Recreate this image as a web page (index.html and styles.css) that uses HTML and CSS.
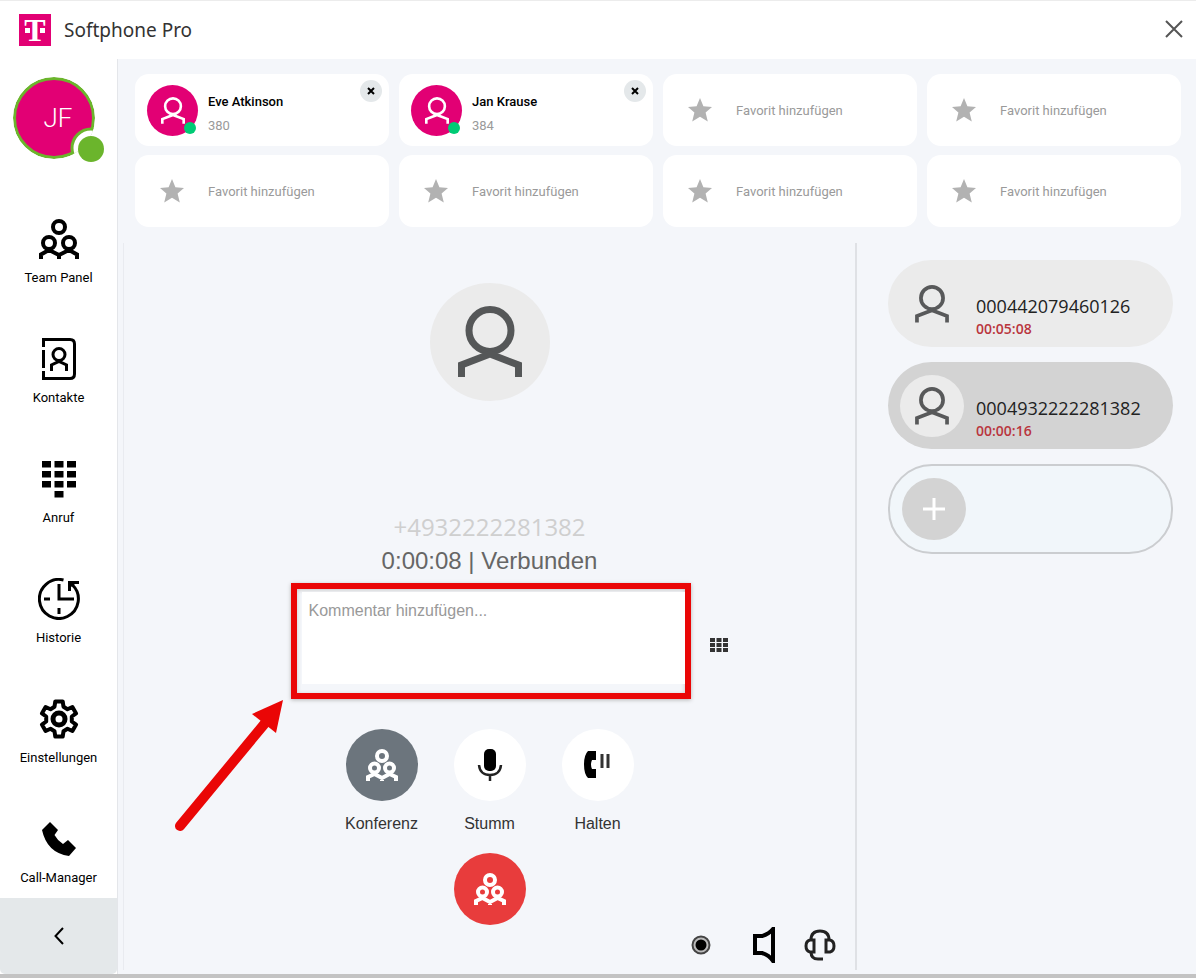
FILE: index.html
```html
<!DOCTYPE html>
<html lang="de">
  <head>
    <meta charset="UTF-8">
    <title>Softphone Pro</title>
    <link rel="stylesheet" href="styles.css">
  </head>
  <body>
    <svg class="sprite" aria-hidden="true">
      <symbol id="person" viewBox="0 0 64 72">
        <g fill="none" stroke="currentColor" stroke-width="7">
          <circle cx="32" cy="24.500" r="21"/>
          <path d="M3.500 71V59L32 48L60.500 59V71"/>
        </g>
      </symbol>
      <symbol id="team" viewBox="0 0 40 40">
        <g fill="none" stroke="currentColor" stroke-width="4">
          <circle cx="20" cy="8" r="6"/>
          <circle cx="10" cy="24" r="6"/>
          <circle cx="30" cy="24" r="6"/>
          <path d="M2 40V35.500L10 31L20 36L30 31L38 35.500V40M20 35V40"/>
        </g>
      </symbol>
      <symbol id="team-bold" viewBox="0 0 32 32">
        <g fill="none" stroke="currentColor" stroke-width="4">
          <circle cx="16" cy="7" r="5"/>
          <circle cx="8.500" cy="19" r="4.500"/>
          <circle cx="23.500" cy="19" r="4.500"/>
          <path d="M2 32V28L8.500 25L16 29L23.500 25L30 28V32M16 28V32"/>
        </g>
      </symbol>
      <symbol id="star" viewBox="0 0 24 24">
        <path fill="currentColor" d="M12 0L15.400 8.200L24 9L17.600 14.600L19.800 23.500L12 18.800L4.200 23.500L6.400 14.600L0 9L8.600 8.200Z"/>
      </symbol>
      <symbol id="cross" viewBox="0 0 8 8">
        <path d="M1 1L7 7M7 1L1 7" fill="none" stroke="currentColor" stroke-width="2"/>
      </symbol>
    </svg>

    <header class="titlebar">
      <span class="logo">T</span>
      <h1>Softphone Pro</h1>
      <button class="close" aria-label="Schließen">
        <svg width="18" height="18" viewBox="0 0 18 18"><path d="M1 1L17 17M17 1L1 17" stroke="#555" stroke-width="2"/></svg>
      </button>
    </header>

    <div class="app">
      <aside class="sidebar">
        <svg class="profile" width="92" height="86" viewBox="0 0 92 86">
          <clipPath id="disc"><circle cx="41" cy="41" r="41"/></clipPath>
          <g clip-path="url(#disc)">
            <circle cx="41" cy="41" r="39.500" fill="#e20074" stroke="#6bb52c" stroke-width="3"/>
            <circle cx="78" cy="71" r="19" fill="#fff" stroke="#6bb52c" stroke-width="3"/>
          </g>
          <circle cx="78" cy="72" r="13" fill="#6bb52c"/>
          <text x="45" y="50" text-anchor="middle">JF</text>
        </svg>

        <nav>
          <a href="#team">
            <span class="icon"><svg width="40" height="40"><use href="#team"/></svg></span>
            Team Panel
          </a>
          <a href="#kontakte">
            <span class="icon">
              <svg width="34" height="42" viewBox="0 0 34 42" fill="none" stroke="#000" stroke-width="3">
                <path d="M1.500 9V1.500H28Q32.500 1.500 32.500 6V36Q32.500 40.500 28 40.500H1.500V33M1.500 12V30"/>
                <circle cx="17" cy="16.500" r="6"/>
                <path d="M9.500 33V27L17 23.500L24.500 27V33"/>
              </svg>
            </span>
            Kontakte
          </a>
          <a href="#anruf">
            <span class="icon">
              <svg width="34" height="37" viewBox="0 0 34 37">
                <path d="M0 0h9v6.500h-9zM12.500 0h9v6.500h-9zM25 0h9v6.500h-9zM0 10h9v6.500h-9zM12.500 10h9v6.500h-9zM25 10h9v6.500h-9zM0 20h9v6.500h-9zM12.500 20h9v6.500h-9zM25 20h9v6.500h-9zM12.500 30h9v6.500h-9z"/>
              </svg>
            </span>
            Anruf
          </a>
          <a href="#historie">
            <span class="icon">
              <svg width="42" height="42" viewBox="0 0 42 42" fill="none" stroke="#000" stroke-width="3">
                <path d="M25.500 2A19.500 19.500 0 1 0 34.500 7"/>
                <path d="M21 6V21H36M6 21H12M21 30V36"/>
                <path d="M30 3H41V6H37L33 9V13H30Z" fill="#000" stroke="none"/>
              </svg>
            </span>
            Historie
          </a>
          <a href="#einstellungen">
            <span class="icon">
              <svg width="40" height="40" viewBox="0 0 40 40" fill="none" stroke="#000" stroke-width="4" stroke-linejoin="round">
                <path d="M16.300 2.400H23.700L24.500 7.700L28.500 10.200L33.400 8L37.100 14.400L32.800 17.500V22.500L37.100 25.600L33.400 32L28.500 29.800L24.500 32.300L23.700 37.600H16.300L15.500 32.300L11.500 29.800L6.600 32L2.900 25.600L7.200 22.500V17.500L2.900 14.400L6.600 8L11.500 10.200L15.500 7.700Z"/>
                <circle cx="20" cy="20" r="6" stroke-width="5"/>
              </svg>
            </span>
            Einstellungen
          </a>
          <a href="#manager">
            <span class="icon">
              <svg width="34" height="34" viewBox="0 0 34 34"><path d="M8 0L16 8L12.500 13Q15.500 18.500 21 22L26 18L34 26L27 34Q5 31 0 8Z"/></svg>
            </span>
            Call-Manager
          </a>
        </nav>

        <button class="collapse" aria-label="Einklappen">
          <svg width="10" height="18" viewBox="0 0 10 18"><path d="M9 1L1.500 9L9 17" fill="none" stroke="#000" stroke-width="2"/></svg>
        </button>
      </aside>

      <main>
        <section class="favorites">
          <div class="card">
            <span class="avatar"><svg width="24" height="27"><use href="#person"/></svg></span>
            <div class="contact"><strong>Eve Atkinson</strong><small>380</small></div>
            <button class="remove" aria-label="Entfernen"><svg width="8" height="8"><use href="#cross"/></svg></button>
          </div>
          <div class="card">
            <span class="avatar"><svg width="24" height="27"><use href="#person"/></svg></span>
            <div class="contact"><strong>Jan Krause</strong><small>384</small></div>
            <button class="remove" aria-label="Entfernen"><svg width="8" height="8"><use href="#cross"/></svg></button>
          </div>
          <button class="card"><svg class="star"><use href="#star"/></svg>Favorit hinzufügen</button>
          <button class="card"><svg class="star"><use href="#star"/></svg>Favorit hinzufügen</button>
          <button class="card"><svg class="star"><use href="#star"/></svg>Favorit hinzufügen</button>
          <button class="card"><svg class="star"><use href="#star"/></svg>Favorit hinzufügen</button>
          <button class="card"><svg class="star"><use href="#star"/></svg>Favorit hinzufügen</button>
          <button class="card"><svg class="star"><use href="#star"/></svg>Favorit hinzufügen</button>
        </section>

        <div class="content">
          <section class="call">
            <span class="caller"><svg width="64" height="72"><use href="#person"/></svg></span>
            <p class="number">+4932222281382</p>
            <p class="status">0:00:08 | Verbunden</p>

            <div class="comment-row">
              <div class="comment">
                <textarea aria-label="Kommentar" placeholder="Kommentar hinzufügen..."></textarea>
                <svg class="arrow" width="112" height="134" viewBox="0 0 112 134">
                  <path d="M7 127L93 23" stroke="#ea0606" stroke-width="10" stroke-linecap="round"/>
                  <path d="M110 1L79 15L103 34Z" fill="#ea0606"/>
                </svg>
              </div>
              <button class="keypad" aria-label="Tastenfeld">
                <svg width="18" height="14" viewBox="0 0 18 14"><path fill="#333" d="M0 0h5v4H0zM6.500 0h5v4h-5zM13 0h5v4h-5zM0 5h5v4H0zM6.500 5h5v4h-5zM13 5h5v4h-5zM0 10h5v4H0zM6.500 10h5v4h-5zM13 10h5v4h-5z"/></svg>
              </button>
            </div>

            <div class="actions">
              <button>
                <span class="round gray"><svg width="32" height="32"><use href="#team-bold"/></svg></span>
                Konferenz
              </button>
              <button>
                <span class="round">
                  <svg width="26" height="32" viewBox="0 0 26 32">
                    <rect x="7" y="0" width="12" height="22" rx="5"/>
                    <path d="M2 16Q3 26 13 26T24 16M13 26V32" fill="none" stroke="#222" stroke-width="2.500"/>
                  </svg>
                </span>
                Stumm
              </button>
              <button>
                <span class="round">
                  <svg width="28" height="30" viewBox="0 0 28 30">
                    <path d="M4 1H12V10H8Q6 14.500 8 19H12V28H4Q0 24 0 14.500T4 1Z"/>
                    <path d="M18 4V18M24 4V18" stroke="#333" stroke-width="3"/>
                  </svg>
                </span>
                Halten
              </button>
            </div>
            <button class="round red" aria-label="Auflegen"><svg width="32" height="32"><use href="#team-bold"/></svg></button>

            <div class="tools">
              <button aria-label="Aufnahme">
                <svg width="20" height="20" viewBox="0 0 20 20"><circle cx="10" cy="10" r="8.500" fill="#bbb" stroke="#444" stroke-width="2"/><circle cx="10" cy="10" r="5.500"/></svg>
              </button>
              <button aria-label="Lautsprecher">
                <svg width="22" height="36" viewBox="0 0 22 36"><path d="M2 9H9Q16 7 20 2V34Q16 28 9 26H2Z" fill="none" stroke="#000" stroke-width="4"/></svg>
              </button>
              <button aria-label="Headset">
                <svg width="32" height="32" viewBox="0 0 32 32" fill="none" stroke="#222" stroke-width="3">
                  <path d="M7 11Q7 2 16 2T25 11M6 11H10V23H6Q2 22 2 17T6 11ZM26 11H22V23H26Q30 22 30 17T26 11ZM7 23Q7 30 14 30H19"/>
                </svg>
              </button>
            </div>
          </section>

          <aside class="lines">
            <button class="line">
              <span class="line-icon"><svg width="34" height="38"><use href="#person"/></svg></span>
              <span class="line-text">000442079460126<time>00:05:08</time></span>
            </button>
            <button class="line active">
              <span class="line-icon"><svg width="34" height="38"><use href="#person"/></svg></span>
              <span class="line-text">0004932222281382<time>00:00:16</time></span>
            </button>
            <button class="line add" aria-label="Leitung hinzufügen">
              <span class="line-icon"><svg width="22" height="22" viewBox="0 0 22 22"><path d="M11 0V22M0 11H22" stroke="#fff" stroke-width="3"/></svg></span>
            </button>
          </aside>
        </div>
      </main>
    </div>
  </body>
</html>
```
FILE: styles.css
```css
* {
  box-sizing: border-box;
}

body {
  display: flex;
  flex-direction: column;
  min-height: 100vh;
  margin: 0;
  border-top: 1px solid #ececec;
  border-bottom: 4px solid #c3c3c3;
  background-color: #fff;
  color: #000;
  font-family: Roboto, "Liberation Sans", sans-serif;
  font-size: 13px;
}

button {
  padding: 0;
  border: none;
  background: none;
  color: inherit;
  font: inherit;
  cursor: pointer;
}

svg {
  display: block;
}

.sprite {
  position: absolute;
  width: 0;
  height: 0;
}

/* title bar */
.titlebar {
  display: flex;
  align-items: center;
  height: 58px;
  padding: 0 12px 0 19px;
}

.logo {
  position: relative;
  width: 32px;
  height: 32px;
  background-color: #e20074;
  color: #fff;
  font: bold 32px/32px "Liberation Serif", serif;
  text-align: center;
}

.logo::before,
.logo::after {
  content: "";
  position: absolute;
  top: 14px;
  left: 6px;
  width: 5px;
  height: 5px;
  background-color: #fff;
}

.logo::after {
  right: 6px;
  left: auto;
}

h1 {
  margin: 0 auto 0 13px;
  color: #333;
  font: 19px/28px "Noto Sans", sans-serif;
}

.close {
  padding: 0 1px 2px;
}

.app {
  display: flex;
  flex: 1;
}

/* sidebar */
.sidebar {
  display: flex;
  flex-direction: column;
  flex: none;
  width: 117px;
}

.profile {
  margin: 18px 0 0 13px;
}

.profile text {
  fill: #fff;
  font-size: 26px;
  font-weight: 300;
}

nav {
  display: flex;
  flex-direction: column;
  gap: 51px;
  margin-top: 55px;
}

nav a {
  color: #000;
  line-height: 18px;
  text-align: center;
  text-decoration: none;
}

.icon {
  display: flex;
  align-items: center;
  justify-content: center;
  height: 42px;
  margin-bottom: 9px;
}

.collapse {
  display: flex;
  align-items: center;
  justify-content: center;
  height: 76px;
  margin-top: auto;
  border-radius: 0 0 5px 5px;
  background-color: #e4e8ea;
}

/* favorites */
main {
  display: flex;
  flex-direction: column;
  flex: 1;
  min-width: 0;
  border-left: 1px solid #e4e6ea;
  background-color: #f4f6fa;
}

.favorites {
  display: grid;
  grid-template-columns: repeat(4, 1fr);
  gap: 9px 10px;
  padding: 15px 15px 16px 17px;
}

.card {
  position: relative;
  display: flex;
  align-items: center;
  gap: 10px;
  height: 72px;
  padding-left: 12px;
  border-radius: 14px;
  background-color: #fff;
  color: #9a9a9a;
}

.contact {
  padding-top: 7px;
}

.card strong,
.card small {
  display: block;
  font-size: 13px;
  line-height: 24px;
}

.card strong {
  color: #000;
  font-weight: 500;
}

.avatar {
  position: relative;
  display: flex;
  align-items: center;
  justify-content: center;
  width: 51px;
  height: 51px;
  border-radius: 50%;
  background-color: #e20074;
  color: #fff;
}

.avatar::after {
  content: "";
  position: absolute;
  right: 2px;
  bottom: 2px;
  width: 12px;
  height: 12px;
  border-radius: 50%;
  background-color: #00cb75;
}

.star {
  width: 24px;
  height: 24px;
  margin: 0 14px 0 13px;
  color: #b2b2b2;
}

.remove {
  position: absolute;
  top: 6px;
  right: 7px;
  display: flex;
  align-items: center;
  justify-content: center;
  width: 22px;
  height: 22px;
  border-radius: 50%;
  background-color: #e4e8ea;
  color: #000;
}

.content {
  display: flex;
  flex: 1;
  margin: 0 0 4px 5px;
}

/* current call */
.call {
  display: flex;
  flex-direction: column;
  align-items: center;
  flex: 1;
  padding-top: 40px;
  border-right: 2px solid #dfe1e5;
  border-left: 1px solid #e9ebf0;
  font-family: "Liberation Sans", Arial, sans-serif;
}

.caller {
  display: flex;
  align-items: center;
  justify-content: center;
  width: 120px;
  height: 118px;
  margin-bottom: 109px;
  border-radius: 50%;
  background-color: #ebebeb;
  color: #555758;
}

.call p {
  margin: 0;
  font-size: 24px;
  line-height: 34px;
}

.call .number {
  color: #cfcfcf;
  font-family: "Open Sans", sans-serif;
}

.call .status {
  color: #666;
}

.comment-row {
  display: grid;
  grid-template-columns: 1fr 400px 1fr;
  align-items: center;
  width: 100%;
  margin: 5px 0 30px;
  padding-left: 2px;
}

.comment {
  position: relative;
  grid-column: 2;
  height: 116px;
  padding: 3px 0 9px 5px;
  border: 6px solid #ea0606;
  box-shadow: 0 1px 4px #b5b5b5, inset 0 1px 4px #c5c5c5;
}

textarea {
  display: block;
  width: 100%;
  height: 100%;
  padding: 9px 7px;
  border: none;
  background-color: #fff;
  font: 16px/20px "Liberation Sans", Arial, sans-serif;
  resize: none;
}

textarea::placeholder {
  color: #999;
}

.arrow {
  position: absolute;
  top: 110px;
  left: -124px;
}

.keypad {
  justify-self: start;
  margin: 8px 0 0 19px;
}

.actions {
  display: flex;
  gap: 34px;
  margin-bottom: 19px;
}

.actions button {
  width: 74px;
  color: #333;
  font-size: 16px;
  line-height: 20px;
}

.round {
  display: flex;
  align-items: center;
  justify-content: center;
  width: 72px;
  height: 72px;
  border-radius: 50%;
  background-color: #fff;
}

.actions .round {
  margin: 0 auto 13px;
}

.gray {
  background-color: #6c757d;
  color: #fff;
}

.round.red {
  background-color: #e83c3c;
  color: #fff;
}

.tools {
  display: flex;
  align-items: center;
  align-self: flex-end;
  margin: auto 19px 7px 0;
}

.tools button {
  margin-left: 29px;
}

.tools button:first-child {
  margin-right: 13px;
}

/* phone lines */
.lines {
  display: flex;
  flex-direction: column;
  gap: 15px;
  width: 339px;
  padding: 17px 23px 0 31px;
}

.line {
  display: flex;
  align-items: center;
  gap: 12px;
  height: 87px;
  padding-left: 12px;
  border-radius: 44px;
  background-color: #ebebeb;
  color: #222;
  font: 18px/26px "Open Sans", sans-serif;
  text-align: left;
}

.line-text {
  padding-top: 24px;
}

.line time {
  display: block;
  color: #b9353e;
  font-size: 14px;
  font-weight: 600;
  line-height: 20px;
}

.line-icon {
  display: flex;
  align-items: center;
  justify-content: center;
  width: 64px;
  height: 62px;
  border-radius: 50%;
  background-color: #ebebeb;
  color: #58595a;
}

.line.active {
  background-color: #d3d3d3;
}

.line.add {
  height: 90px;
  border: 2px solid #cbcdd0;
  background-color: #f1f6fa;
}

.add .line-icon {
  background-color: #d3d3d3;
}
```
